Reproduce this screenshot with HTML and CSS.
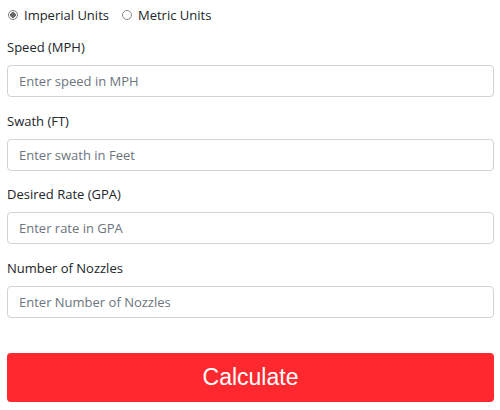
FILE: index.html
```html
<!DOCTYPE html>
<html>
<head>
<meta charset="utf-8">
<link rel="stylesheet" href="styles.css">
</head>
<body>
<form class="calc">
  <div class="units">
    <label class="radio"><input type="radio" name="u" checked> Imperial Units</label>
    <label class="radio"><input type="radio" name="u"> Metric Units</label>
  </div>
  <div class="field">
    <label class="lbl">Speed (MPH)</label>
    <input class="inp" type="text" placeholder="Enter speed in MPH">
  </div>
  <div class="field">
    <label class="lbl">Swath (FT)</label>
    <input class="inp" type="text" placeholder="Enter swath in Feet">
  </div>
  <div class="field">
    <label class="lbl">Desired Rate (GPA)</label>
    <input class="inp" type="text" placeholder="Enter rate in GPA">
  </div>
  <div class="field">
    <label class="lbl">Number of Nozzles</label>
    <input class="inp" type="text" placeholder="Enter Number of Nozzles">
  </div>
  <button class="btn" type="button">Calculate</button>
</form>
</body>
</html>
```
FILE: styles.css
```css
html, body { margin: 0; padding: 0; background: #fff; }
body {
  font-family: "Open Sans", "Noto Sans", sans-serif;
  font-size: 13px;
  color: #212529;
}
.calc {
  display: flex;
  flex-direction: column;
  padding: 4px 6px 0 7px;
}
.units {
  display: flex;
  gap: 12px;
  height: 22px;
  align-items: center;
  margin-bottom: 11px;
}
.radio {
  display: flex;
  align-items: center;
  gap: 5px;
}
.radio input {
  appearance: none;
  -webkit-appearance: none;
  box-sizing: border-box;
  margin: 0 1px 0 1px;
  width: 10px;
  height: 10px;
  border: 1px solid #8a8a8a;
  border-radius: 50%;
  background: #fff;
}
.radio input:checked {
  border-color: #7a7a7a;
  background: radial-gradient(circle, #6a6a6a 0 2.6px, #fff 3px);
}
.field {
  display: flex;
  flex-direction: column;
  margin-bottom: 13.66px;
}
.lbl {
  line-height: 21px;
  margin-bottom: 7px;
}
.inp {
  box-sizing: border-box;
  height: 32px;
  width: 100%;
  border: 1px solid #ced4da;
  border-radius: 4px;
  padding: 0 11px;
  font-family: inherit;
  font-size: 13px;
  color: #495057;
}
.inp::placeholder { color: #6c757d; }
.btn {
  margin-top: 21.5px;
  height: 49px;
  width: 100%;
  border: none;
  border-radius: 4px;
  background: #fe282e;
  color: #fff;
  font-family: "Liberation Sans", Arial, sans-serif;
  font-size: 23px;
}
```
